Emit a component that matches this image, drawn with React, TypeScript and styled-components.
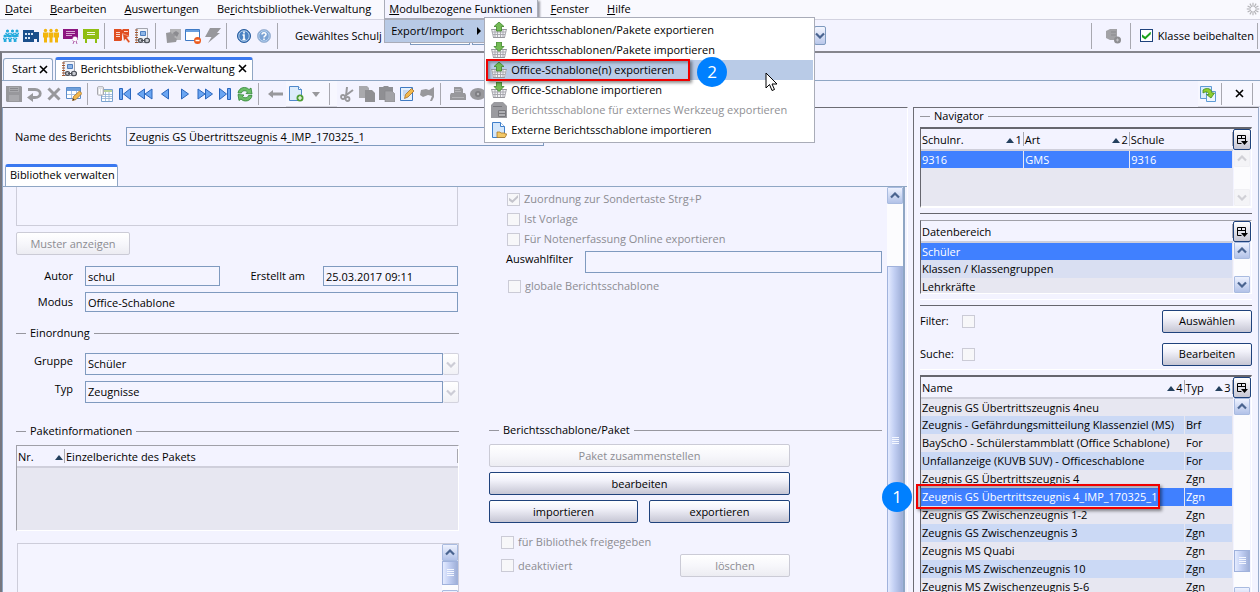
import React from "react";
import styled, { createGlobalStyle, css } from "styled-components";

const GlobalStyle = createGlobalStyle`
  *, *::before, *::after { box-sizing: border-box; }
  body {
    margin: 0;
    background: #f3f3ff;
    color: #000;
    font: 11px/16px "Open Sans", "Noto Sans", sans-serif;
  }
  button, input, select, textarea {
    font: inherit;
    color: inherit;
    margin: 0;
    padding: 0;
    border-radius: 0;
    outline: none;
  }
`;

/* ---------- frame ---------- */

const Window = styled.div`
  display: flex;
  flex-direction: column;
  height: 100vh;
  overflow: hidden;
`;

const MenuBar = styled.nav`
  display: flex;
  gap: 8px;
  height: 20px;
  background: #f9f9fe;
  border-bottom: 1px solid #d3d3e0;
`;

const MenuEntry = styled.div<{ $open?: boolean }>`
  position: relative;
  border: 1px solid transparent;
  border-top: 0;
  ${(p) =>
    p.$open &&
    css`
      border-color: #a9acb8;
      background: #f3f3ff;
      box-shadow: 2px 1px 2px #9a9aa4;
    `}
`;

const MenuTitle = styled.button`
  height: 18px;
  padding: 0 4px;
  border: 0;
  background: none;
  line-height: 18px;
  white-space: nowrap;
`;

const Busy = styled.div`
  margin-left: auto;
  width: 14px;
  overflow: hidden;
  display: flex;
`;

const Cascade = styled.div`
  position: absolute;
  z-index: 5;
  top: 19px;
  left: -1px;
  width: 102px;
  border: 1px solid #a9acb8;
  background: #b8cae6;
`;

const CascadeItem = styled.button`
  display: flex;
  align-items: center;
  justify-content: space-between;
  width: 100%;
  height: 22px;
  padding: 0 3px 0 6px;
  border: 0;
  background: none;
`;

const Popup = styled.div`
  position: absolute;
  top: -3px;
  left: 99px;
  width: 331px;
  padding: 2px 1px;
  border: 1px solid #a9acb8;
  background: #fff;
`;

const PopupItem = styled.button<{ $active?: boolean }>`
  position: relative;
  display: flex;
  align-items: center;
  gap: 4px;
  width: 100%;
  height: 20px;
  padding: 0 5px;
  border: 0;
  background: ${(p) => (p.$active ? "#b9cbe7" : "none")};
  white-space: nowrap;
  &:disabled { color: #909094; }
`;

const Toolbar = styled.div`
  display: flex;
  align-items: center;
  height: 31px;
  padding-left: 1px;
  background: #f3f3ff;
`;

const SubToolbar = styled(Toolbar)`
  height: 26px;
  padding-left: 2px;
`;

const IconButton = styled.button`
  display: flex;
  align-items: center;
  justify-content: center;
  width: 20px;
  height: 20px;
  border: 0;
  background: none;
`;

const Divider = styled.span`
  width: 1px;
  height: 26px;
  margin: 0 7px 0 3px;
  background: #a8a8b0;
`;

const SmallDivider = styled(Divider)`
  height: 22px;
`;

const EndDivider = styled(Divider)`
  margin-right: 2px;
`;

const PaddedTools = styled.div`
  padding: 0 4px;
`;

const Spacer = styled.span`
  flex: 1;
`;

const YearPicker = styled.label`
  display: flex;
  align-items: center;
  gap: 28px;
  margin-left: 10px;
  white-space: nowrap;
`;

const YearField = styled.div`
  display: flex;
  gap: 2px;
`;

const YearInput = styled.input`
  width: 60px;
  height: 19px;
  border: 1px solid #7f9abf;
  background: #fff;
`;

const YearSelect = styled.select`
  appearance: none;
  width: 342px;
  height: 19px;
  border: 1px solid #7f9abf;
  background: #f4f4ff;
`;

const ArrowCap = styled.span`
  display: flex;
  align-items: center;
  justify-content: center;
  width: 12px;
  height: 19px;
  margin-left: -2px;
  border: 1px solid #7f9abf;
  border-radius: 2px;
  background: linear-gradient(#f4f6ff, #b9c7ea);
`;

const ClassLock = styled.label`
  display: flex;
  align-items: center;
  gap: 5px;
  margin-left: 2px;
  white-space: nowrap;
`;

const Workspace = styled.div`
  flex: 1;
  display: flex;
  flex-direction: column;
  min-height: 0;
  border-top: 2px solid #85858d;
  border-left: 2px solid #77777f;
  padding-top: 4px;
`;

const TabStrip = styled.div`
  display: flex;
  align-items: flex-end;
  gap: 2px;
  height: 24px;
  padding-left: 1px;
  border-bottom: 1px solid #8fa6c4;
`;

const Tab = styled.button<{ $active?: boolean }>`
  display: flex;
  align-items: center;
  gap: 3px;
  height: ${(p) => (p.$active ? "23px" : "22px")};
  padding: 0 4px 1px 8px;
  border: 1px solid #8fa6c4;
  border-bottom: 0;
  border-radius: 3px 3px 0 0;
  background: #f9f9ff;
  ${(p) =>
    p.$active &&
    css`
      padding: 0 5px 3px;
      background: #fff;
      border-top: 3px solid #3a78f0;
    `}
`;

const ToolGroup = styled.div`
  display: flex;
  align-items: center;
  height: 26px;
  border-bottom: 1px solid #d6d6e2;
  background: #f7f7ff;
`;

const Panes = styled.div`
  flex: 1;
  display: flex;
  gap: 5px;
  min-height: 0;
`;

/* ---------- editor pane ---------- */

const Editor = styled.main`
  flex: 1;
  display: flex;
  flex-direction: column;
  min-width: 0;
  border-top: 1px solid #6c6c74;
  border-left: 1px solid #8fa6c4;
  border-right: 1px solid #fff;
`;

const NameRow = styled.label`
  display: flex;
  align-items: center;
  gap: 15px;
  padding: 19px 0 0 12px;
`;

const TextInput = styled.input`
  flex: 1;
  min-width: 0;
  height: 20px;
  padding: 0 2px;
  border: 1px solid #7f9abf;
  background: #f4f4ff;
`;

const NameInput = styled(TextInput)`
  flex: none;
  width: 418px;
  height: 19px;
`;

const InnerTabs = styled.div`
  display: flex;
  margin-top: 18px;
  padding-left: 2px;
  border-bottom: 1px solid #8fa6c4;
`;

const InnerTab = styled.button`
  height: 22px;
  padding: 0 2px 3px 4px;
  border: 1px solid #8fa6c4;
  border-top: 3px solid #3a78f0;
  border-bottom: 0;
  border-radius: 3px 3px 0 0;
  background: #fff;
`;

const ScrollArea = styled.div`
  flex: 1;
  display: flex;
  min-height: 0;
  margin-right: 2px;
  border-right: 2px solid #8fa6c4;
  overflow: hidden;
`;

const Form = styled.div`
  flex: 1;
  display: grid;
  grid-template-columns: 443px 1fr;
  column-gap: 30px;
  padding: 0 5px 0 13px;
`;

const Column = styled.div`
  display: flex;
  flex-direction: column;
  min-width: 0;
`;

const Preview = styled.textarea`
  display: block;
  height: 39px;
  width: 442px;
  border: 1px solid #cdcdda;
  border-top: 0;
  background: #f4f4ff;
  resize: none;
`;

const Button = styled.button`
  height: 23px;
  padding: 0 8px;
  border: 1px solid #1f427c;
  border-radius: 2px;
  background: linear-gradient(#ffffff, #f2f2fa 35%, #c6c6d4);
  white-space: nowrap;
  &:disabled {
    color: #8c8c92;
    border-color: #cbcbd6;
    background: linear-gradient(#ffffff, #f7f7fb 50%, #ececf2);
  }
`;

const SampleButton = styled(Button)`
  width: 114px;
  margin: 6px 0 11px;
`;

const FieldGrid = styled.div`
  display: grid;
  grid-template-columns: 57px 1fr;
  align-items: center;
  gap: 6px 12px;
`;

const FieldLabel = styled.label`
  text-align: right;
`;

const RaisedLabel = styled(FieldLabel)`
  align-self: start;
`;

const FieldLine = styled.div`
  display: flex;
  align-items: center;
  padding-right: 1px;
`;

const HalfInput = styled(TextInput)`
  flex: none;
  width: 135px;
`;

const MidLabel = styled.label`
  flex: 1;
  text-align: right;
  padding-right: 18px;
`;

const Combo = styled.div`
  display: flex;
`;

const ComboSelect = styled.select`
  flex: 1;
  appearance: none;
  height: 22px;
  padding: 0 2px;
  border: 1px solid #7f9abf;
  background: #f4f4ff;
  opacity: 1;
  color: #000;
`;

const ComboCap = styled.span`
  display: flex;
  align-items: center;
  justify-content: center;
  width: 16px;
  height: 22px;
  border: 1px solid #d3d3de;
  border-left: 0;
  border-radius: 2px;
  background: linear-gradient(#fff, #f1f1f6);
`;

const Legend = styled.h2<{ $top: number; $bottom: number }>`
  display: flex;
  flex: none;
  align-items: center;
  gap: 4px;
  margin: ${(p) => p.$top}px 0 ${(p) => p.$bottom}px;
  font-size: 11px;
  font-weight: 400;
  line-height: 16px;
  &::before, &::after { content: ""; height: 1px; background: #97979f; }
  &::before { width: 10px; }
  &::after { flex: 1; }
`;

const Frame = styled.div<{ $height?: string; $soft?: boolean }>`
  display: flex;
  flex: none;
  height: ${(p) => p.$height ?? "auto"};
  border-style: solid;
  border-width: 1px;
  border-color: ${(p) => (p.$soft ? "#a0a0a8 #fff #fff #a0a0a8" : "#66666e #fff #fff #66666e")};
  background: #e7e7f1;
`;

const GapFrame = styled(Frame)`
  border-width: 2px 1px 2px 1px;
`;

const ClippedFrame = styled(Frame)`
  border-top-color: #a0a0a8;
`;

const Clip = styled.div`
  flex: 1;
  min-width: 0;
  overflow: hidden;
`;

const TableHolder = styled.div`
  flex: 1;
  min-width: 0;
`;

const Table = styled.table`
  width: 100%;
  table-layout: fixed;
  border-collapse: collapse;
`;

const HeadCell = styled.th`
  height: 21px;
  padding: 2px 0 0 1px;
  border-bottom: 2px solid #cfcfdb;
  background: linear-gradient(90deg, #a8a8b0, #a8a8b0) right center / 1px 14px no-repeat #f3f3ff;
  font-weight: 400;
  text-align: left;
  white-space: nowrap;
`;

const HeadContent = styled.span`
  display: flex;
  align-items: center;
  justify-content: space-between;
  padding-right: 2px;
`;

const SortMark = styled.span`
  display: flex;
  align-items: center;
  gap: 1px;
`;

const Row = styled.tr<{ $tone: "plain" | "alt" | "soft" | "selected" }>`
  height: 18px;
  background: ${(p) =>
    ({ plain: "#e7e7f1", alt: "#cbd9f5", soft: "#d9dff2", selected: "#4080ff" })[p.$tone]};
  color: ${(p) => (p.$tone === "selected" ? "#fff" : "#000")};
`;

const Cell = styled.td`
  position: relative;
  height: 18px;
  padding: 0 1px;
  line-height: 16px;
  border-right: 1px solid #e7e7f1;
  white-space: nowrap;
`;

const Notes = styled.div`
  display: flex;
  height: 120px;
  margin: 12px 0 0 1px;
  border: 1px solid #cdcdda;
  background: #f4f4ff;
`;

const NotesInput = styled.textarea`
  flex: 1;
  border: 0;
  background: none;
  resize: none;
`;

/* ---------- check boxes ---------- */

const CheckLabel = styled.label<{ $muted?: boolean }>`
  display: flex;
  align-items: center;
  gap: 4px;
  height: 20px;
  color: ${(p) => (p.$muted ? "#8c8c92" : "inherit")};
`;

const Check = styled.input.attrs({ type: "checkbox" })`
  appearance: none;
  display: flex;
  align-items: center;
  justify-content: center;
  width: 13px;
  height: 13px;
  border: 1px solid #1f427c;
  background: #fff;
  &:checked::after {
    content: "";
    width: 9px;
    height: 8px;
    background: #1ba31b;
    clip-path: polygon(0 35%, 38% 65%, 100% 0, 100% 35%, 38% 100%, 0 70%);
  }
  &:disabled { border-color: #cbcbd6; background: #f7f7f9; }
  &:disabled:checked::after { background: #c4c4cc; }
`;

const OptionList = styled.div`
  padding: 2px 0 0 18px;
`;

const GlobalOption = styled.div`
  padding: 3px 0 1px 19px;
`;

const FilterRow = styled.label`
  display: flex;
  align-items: flex-start;
  justify-content: space-between;
  height: 22px;
  margin-top: 2px;
  padding-left: 17px;
`;

const FilterInput = styled(TextInput)`
  flex: none;
  width: calc(100% - 79px);
  height: 22px;
`;

const ButtonStack = styled.div`
  display: grid;
  grid-template-columns: 149px 141px;
  gap: 5px 11px;
  width: 301px;
`;

const WideButton = styled(Button)`
  grid-column: 1 / -1;
`;

const ReleaseGrid = styled.div`
  width: 301px;
  margin-top: 9px;
  padding-left: 12px;
`;

const DeleteLine = styled.div`
  display: flex;
  justify-content: space-between;
  align-items: center;
  height: 27px;
`;

const DeleteButton = styled(Button)`
  width: 110px;
`;

/* ---------- scroll bars ---------- */

const Track = styled.div`
  display: flex;
  flex-direction: column;
  width: 16px;
  height: 100%;
  background: #fcfcfe;
`;

const StepButton = styled.button<{ $faint?: boolean }>`
  display: flex;
  align-items: center;
  justify-content: center;
  flex: none;
  height: 17px;
  border: 1px solid ${(p) => (p.$faint ? "#f0f0f4" : "#a9bbe0")};
  border-radius: 1px;
  background: ${(p) => (p.$faint ? "#f4f4f7" : "linear-gradient(#eef2ff, #b2c2e8)")};
`;

const Thumb = styled.div<{ $size: string }>`
  display: flex;
  align-items: center;
  justify-content: center;
  flex: none;
  height: ${(p) => p.$size};
  border: 1px solid #a0b2dc;
  background: linear-gradient(90deg, #e4ebff, #c2cff3 45%, #a0b0d8);
`;

const Grip = styled.span`
  width: 7px;
  height: 8px;
  background: repeating-linear-gradient(#f4f7ff 0 1px, transparent 1px 2px);
`;

const Blank = styled.div<{ $size: string }>`
  flex: none;
  height: ${(p) => p.$size};
`;

const SideColumn = styled.div`
  display: flex;
  flex-direction: column;
  width: 18px;
  background: #f3f3ff;
  padding: 0 1px;
`;

const CornerButton = styled.button`
  display: flex;
  align-items: center;
  justify-content: center;
  flex: none;
  height: 21px;
  margin: 0 -1px;
  border: 1px solid #1f427c;
  border-radius: 2px;
  background: linear-gradient(#fff, #c6c6d4);
`;

const TrackHolder = styled.div`
  flex: 1;
  min-height: 0;
`;

/* ---------- navigator ---------- */

const Side = styled.aside`
  display: flex;
  flex: none;
  flex-direction: column;
  width: 346px;
  margin-right: 1px;
  padding: 0 6px;
  border-top: 1px solid #6c6c74;
  border-left: 1px solid #6c6c74;
  border-right: 1px solid #9aaccb;
`;

const Section = styled.div`
  flex: none;
  margin-top: 5px;
  padding-top: 6px;
  border-top: 1px solid #66666e;
`;

const FilterSection = styled.div`
  flex: none;
  margin-top: 5px;
  border-top: 1px solid #fff;
  padding-top: 5px;
`;

const SearchGroup = styled.div`
  display: grid;
  gap: 3px;
  margin-bottom: 5px;
  border-top: 1px solid #66666e;
  border-bottom: 1px solid #fff;
`;

const SearchLine = styled.div`
  display: flex;
  align-items: center;
  justify-content: space-between;
  height: 30px;
`;

const SearchOption = styled.label`
  display: grid;
  grid-template-columns: 42px 13px;
  align-items: center;
`;

const SideButton = styled(Button)`
  width: 90px;
`;

/* ---------- step markers ---------- */

const Highlight = styled.span`
  position: absolute;
  z-index: 2;
  border: 2px solid #f00000;
  box-shadow: 2px 2px 3px rgba(0, 0, 0, 0.45), inset 2px 2px 3px rgba(0, 0, 0, 0.3);
  pointer-events: none;
`;

const ExportHighlight = styled(Highlight)`
  top: -1px;
  left: 0;
  width: 204px;
  height: 22px;
`;

const RowHighlight = styled(Highlight)`
  top: -4px;
  left: -5px;
  width: 244px;
  height: 25px;
`;

const StepBadge = styled.span`
  position: absolute;
  z-index: 3;
  display: flex;
  align-items: center;
  justify-content: center;
  width: 30px;
  height: 30px;
  border-radius: 50%;
  background: #0080ff;
  color: #fff;
  font-size: 17px;
  line-height: 30px;
`;

const ExportBadge = styled(StepBadge)`
  top: -3px;
  left: 211px;
`;

const RowBadge = styled(StepBadge)`
  top: -6px;
  left: -39px;
`;

const Pointer = styled.span`
  position: absolute;
  top: 12px;
  left: 279px;
  z-index: 3;
  display: flex;
`;

/* ---------- drawings ---------- */

const Svg = ({ children, size = 16 }: { children: React.ReactNode; size?: number }) => (
  <svg width={size} height={size} viewBox="0 0 16 16" aria-hidden="true">
    {children}
  </svg>
);

const GREY = "#98989c";

const People = ({ color, tall }: { color: string; tall?: boolean }) => (
  <Svg>
    {tall
      ? [2.5, 8, 13.5].map((x) => (
          <g key={x} fill={color}>
            <circle cx={x} cy="2.500" r="1.700" />
            <path d={`M${x - 2.5} 4.500h5v5h-1v5h-3v-5h-1z`} />
          </g>
        ))
      : [
          [2, 9], [7, 9], [12, 9], [4.5, 4], [9.5, 4], [14, 4],
        ].map(([x, y]) => (
          <g key={`${x}-${y}`} fill="none" stroke={color} strokeWidth="1.300">
            <circle cx={x} cy={y - 1} r=".9" fill={color} />
            <path d={`M${x - 2} ${y + 1}l1.500 1.500h1l1.500-1.500M${x - 0.6} ${y + 2}v3M${x + 0.8} ${y + 2}v3`} />
          </g>
        ))}
  </Svg>
);

const School = () => (
  <Svg>
    <path d="M0 2h11v2h5v10h-2v-3h-3v3H0z" fill="#1b4f8c" />
    <path d="M2 5h2v2H2zM5 5h2v2H5zM8 5h2v2H8zM2 9h2v2H2zM5 9h2v2H5z" fill="#dbe8f6" />
  </Svg>
);

const Certificate = () => (
  <Svg>
    <path d="M0 1h15v10H0z" fill="#8c1580" />
    <path d="M3 3.500h9M3 5.500h9M3 7.500h6" stroke="#d9a8d4" />
    <circle cx="12" cy="11" r="2.600" fill="#fff" stroke="#b565ad" strokeDasharray="1 1" />
    <path d="M11 13l-1 3M13 13l1 3" stroke="#b565ad" />
  </Svg>
);

const Board = () => (
  <Svg>
    <path d="M0 1h16v10H0zM2 11h2v4H2zM12 11h2v4h-2z" fill="#8fbe12" />
    <path d="M4 4.500h8M4 6.500h8" stroke="#f3f9dc" />
  </Svg>
);

const BookArrow = () => (
  <Svg>
    <path d="M0 1h7l1 1 1-1h6v8l-3-1-4-2v6l-1 1H0z" fill="#e04e22" />
    <path d="M2 4.500h4M2 6.500h4M2 8.500h4M10 3.500h4" stroke="#fbd8cb" />
    <path d="M8.500 5.500l7 3-2.500 1 3 4-1.500 1.500-3-4-1.500 2z" fill="#e04e22" stroke="#f9e0d8" strokeWidth=".5" />
  </Svg>
);

const Binder = () => (
  <Svg>
    <path d="M2.500.5h11v14h-11z" fill="#f2f3f8" stroke="#a3a5ae" />
    <path d="M6.500 3.500h5v4h-5z" fill="#8fb6e6" stroke="#4f7fc0" />
    <path d="M1 2h3M1 4.500h3M1 7h3M1 9.500h3M1 12h3M1 14.500h3" stroke="#a4552d" />
    <path
      d="M4.500 12.500c0-2.500 4-2.500 4 0s-4 2.500-4 0zM7 12.500h4.500M10.500 12.500c0-3 5-3 5 0s-5 3-5 0z"
      fill="#c9ccd3"
      stroke="#4c5058"
      strokeWidth="1.200"
    />
  </Svg>
);

const GreyPuzzle = () => (
  <Svg>
    <path d="M5 1h11v11H5z" fill="#b3b3b6" />
    <path d="M1 5l5-1 1 2 3-2 1 3-2 2 3 2-1 3-9 1z" fill={GREY} />
    <path d="M8 5l3-2 3 2-2 4z" fill="#8b8b90" />
  </Svg>
);

const WindowMinus = () => (
  <Svg>
    <path d="M.5 1.500h14v11H.5z" fill="#fff" stroke="#3e79c4" />
    <path d="M1 2h13v2H1z" fill="#6aa0e0" />
    <circle cx="12.500" cy="12.500" r="3.500" fill="#ec5a1c" />
    <path d="M10.500 12.500h4" stroke="#fff" strokeWidth="1.500" />
  </Svg>
);

const Bolt = () => (
  <Svg>
    <path d="M5 0h11l-4 5h3L3 15l3.500-6H0z" fill={GREY} />
  </Svg>
);

const Round = ({ question }: { question?: boolean }) => (
  <Svg>
    <circle cx="8" cy="8" r="6.500" fill={question ? "#7ba3d4" : "#4a82c3"} stroke={question ? "#a4b8d6" : "#275c9e"} />
    <circle cx="8" cy="8" r="5.200" fill="none" stroke="#c7dcf2" strokeWidth=".8" />
    {question ? (
      <path d="M6 6.500c0-2.500 4-2.500 4 0 0 1.500-2 1.200-2 3M8 10.500v1.500" fill="none" stroke="#fff" strokeWidth="1.500" />
    ) : (
      <path d="M8 3.500v2M6.500 7H8v4M6.500 11.500h3" fill="none" stroke="#fff" strokeWidth="1.600" />
    )}
  </Svg>
);

const GreyDb = () => (
  <Svg>
    <path d="M1 3l4-2h7v11H5l-4-2z" fill="#a2a2a6" />
    <path d="M6 4h5M6 7h5" stroke="#8a8a8e" />
    <circle cx="12.500" cy="12" r="3.500" fill="#8e8e92" />
    <path d="M11 12h3M12.500 10.500v3" stroke="#c4c4c8" />
  </Svg>
);

const Floppy = () => (
  <Svg>
    <path d="M0 0h15l1 1v15H1l-1-1z" fill={GREY} />
    <path d="M3 1h10v5H3zM3 9h10v6H3z" fill="#a9a9ad" />
    <path d="M4 2.500h8M4 4.500h8" stroke="#8a8a8e" />
  </Svg>
);

const Undo = () => (
  <Svg>
    <path d="M2 3.500h7c7 0 7 8 0 8H5" fill="none" stroke={GREY} strokeWidth="2.800" />
    <path d="M7 7v9l-6-4.500z" fill={GREY} />
  </Svg>
);

const BigX = () => (
  <Svg>
    <path d="M2.500 2.500l11 11M13.500 2.500l-11 11" stroke={GREY} strokeWidth="3" />
  </Svg>
);

const TableEdit = () => (
  <Svg>
    <path d="M.5 1.500h14v11H.5z" fill="#fff" stroke="#5a8cca" />
    <path d="M1 2h13v3H1z" fill="#6f9fdb" />
    <path d="M1 8.500h13M5.500 5v7M10.500 5v7" stroke="#a9c3e4" />
    <path d="M6.500 14.500l1-4 6-5.500 2.500 2.500-6 6z" fill="#f2b84b" stroke="#a5702b" strokeWidth=".8" />
    <path d="M6.500 14.500l.8-2 1.400 1.400z" fill="#333" />
  </Svg>
);

const PageEdit = () => (
  <Svg>
    <path d="M1.500 1.500h12v13h-12z" fill="#e5f0fc" stroke="#3f7ac2" />
    <path d="M4 5h6M4 7h5M4 9h4" stroke="#a9c3e4" />
    <path d="M5.500 12.500l1-4 6-6 2.500 2.500-6 6z" fill="#f2b84b" stroke="#a5702b" strokeWidth=".8" />
  </Svg>
);

const Sheet = () => (
  <Svg>
    <path d="M4.500 3.500h11v12h-11z" fill="#fff" stroke="#7ba3cf" />
    <path d="M5 4h10v2H5z" fill="#b8d29a" />
    <path d="M5 8.500h10M5 10.500h10M5 12.500h10M8.500 6v9M12 6v9" stroke="#8fb0d4" strokeWidth=".8" />
    <path d="M.5 1.500c0-1.500 6-1.500 6 0v7c0 1-6 1-6 0z" fill="#e2e2e6" stroke="#a8a8ae" />
    <path d="M2.500 3v5M4.500 3v5" stroke="#fff" />
  </Svg>
);

type NavKind = "first" | "rew" | "prev" | "next" | "ff" | "last";
const navPaths: Record<NavKind, string> = {
  first: "M2.500 2.500h3v11h-3zM13.500 2.500v11L6.500 8z",
  rew: "M7.500 3v10L.5 8zM15 3v10L8 8z",
  prev: "M11.500 3v10L4.500 8z",
  next: "M4.500 3v10l7-5z",
  ff: "M1 3v10l7-5zM8.500 3v10l7-5z",
  last: "M2.500 2.500v11L9.500 8zM10.500 2.500h3v11h-3z",
};
const Nav = ({ kind }: { kind: NavKind }) => (
  <Svg>
    <path d={navPaths[kind]} fill="#6aa5f2" stroke="#2a66bd" strokeLinejoin="round" />
  </Svg>
);

const Refresh = () => (
  <Svg>
    <path
      d="M1 7c1-6 8-7 11-3.500L14 2l1 6-6-.5 1.500-1.500C8.500 4 5 4.500 4.500 7z"
      fill="#6cbd68"
      stroke="#2f8436"
      strokeWidth=".8"
    />
    <path
      d="M15 9.500c-1 6-8 7-11 3.500L2 14.500l-1-6 6 .5-1.500 1.500c2 2 5.500 1.500 6-1z"
      fill="#6cbd68"
      stroke="#2f8436"
      strokeWidth=".8"
    />
  </Svg>
);

const BackArrow = () => (
  <Svg>
    <path d="M0 8l5-4v2.500h10v3H5V12z" fill={GREY} />
  </Svg>
);

const PageAdd = () => (
  <Svg>
    <path d="M1.500.5h9l3 3v11h-12z" fill="#dcebfb" stroke="#4f88cb" />
    <path d="M10.500.5v3h3" fill="#fff" stroke="#4f88cb" />
    <circle cx="12" cy="12" r="3.500" fill="#4f9e35" />
    <path d="M10 12h4M12 10v4" stroke="#fff" strokeWidth="1.200" />
  </Svg>
);

const DownTri = () => (
  <Svg>
    <path d="M4 6h8l-4 5z" fill={GREY} />
  </Svg>
);

const Scissors = () => (
  <Svg>
    <path d="M8 1l-1 9M14 4l-8 6" stroke={GREY} strokeWidth="2" />
    <circle cx="4" cy="11" r="2" fill="none" stroke={GREY} strokeWidth="1.800" />
    <circle cx="8.500" cy="13" r="2" fill="none" stroke={GREY} strokeWidth="1.800" />
  </Svg>
);

const Copy = () => (
  <Svg>
    <path d="M0 0h8l2 2v10H0z" fill="#a9a9ad" />
    <path d="M6 4h7l3 3v9H6z" fill="#8f8f93" />
  </Svg>
);

const Paste = () => (
  <Svg>
    <path d="M0 1h4l1-1h4l1 1h4v13H0z" fill="#8f8f93" />
    <path d="M6 5h7l3 3v8H6z" fill="#a2a2a6" stroke="#88888c" strokeWidth=".6" />
  </Svg>
);

const Flag = () => (
  <Svg>
    <path d="M15 1v10l-2 4h-2l2-5-4-1-5 2-3-2 1-5 5-1 3 1z" fill={GREY} />
  </Svg>
);

const Printer = () => (
  <Svg>
    <path d="M4 1h7l2 2v4h2l1 2v5H0V9l1-2h3z" fill={GREY} />
    <path d="M5 3.500h5M5 5.500h6M2 11.500h12" stroke="#b4b4b8" />
  </Svg>
);

const Eye = () => (
  <Svg>
    <ellipse cx="8" cy="8" rx="8" ry="6" fill={GREY} />
    <circle cx="8" cy="8" r="3" fill="#7e7e82" />
    <circle cx="8" cy="8" r="1.200" fill="#b4b4b8" />
  </Svg>
);

const Basket = ({ up }: { up?: boolean }) => (
  <Svg>
    <path d="M0 7h16l-2 8.500H2z" fill="#f1f1f4" />
    <path d="M0 7.500h16M2 15.500h12" stroke="#96969c" />
    <path
      d="M.5 7l2 8.500M15.500 7l-2 8.500M4 8v7M6.500 8v7M9.500 8v7M12 8v7M1 10h14M2 12.500h12"
      stroke="#a4a4aa"
      strokeWidth=".9"
    />
    <path
      d={up ? "M8 0l5 4.500h-2.500V9h-5V4.500H3z" : "M5.500 0h5v4.500H13L8 9.500 3 4.500h2.500z"}
      fill="#74bb55"
      stroke="#3f8529"
      strokeWidth=".8"
    />
  </Svg>
);

const GreyTool = () => (
  <Svg>
    <path d="M0 3l3-3h9l4 4v12H0z" fill="#9b9b9f" />
    <path d="M2 4.500h9M7.500 8.500h7v6h-7z" stroke="#77777b" fill="#b0b0b4" />
    <path d="M7 11.500h7" stroke="#77777b" />
  </Svg>
);

const PageFolder = () => (
  <Svg>
    <path d="M1.500.5h8l4 4v11h-12z" fill="#d5e7fa" stroke="#3f7fca" />
    <path d="M9.500.5v4h4" fill="#fff" stroke="#3f7fca" />
    <path d="M6 15.500V10h3l1 1h4v1h2l-2 3.500z" fill="#f3c866" stroke="#a87a2c" strokeWidth=".8" />
  </Svg>
);

const SwapPages = () => (
  <Svg>
    <path d="M.5.5h11v12H.5z" fill="#dcecfb" stroke="#5e9bd6" />
    <path d="M6.500 5.500h9v10h-9z" fill="#eef6fe" stroke="#5e9bd6" />
    <path d="M3 4c4-3 9-1 9 3h2.500L11 12 6.500 8.500H9C8.500 6 6 5 3 7z" fill="#8fce2f" stroke="#3f8a1f" strokeWidth=".8" />
  </Svg>
);

const CloseX = () => (
  <svg width="9" height="9" viewBox="0 0 9 9" aria-hidden="true">
    <path d="M1 1l7 7M8 1L1 8" stroke="#000" strokeWidth="1.600" />
  </svg>
);

const Chevron = ({ down, color = "#4a6490" }: { down?: boolean; color?: string }) => (
  <svg width="10" height="7" viewBox="0 0 10 7" aria-hidden="true">
    <path d={down ? "M1 1.500l4 4 4-4" : "M1 5.500l4-4 4 4"} fill="none" stroke={color} strokeWidth="2.200" />
  </svg>
);

const SortArrow = () => (
  <svg width="8" height="5" viewBox="0 0 8 5" aria-hidden="true">
    <path d="M0 5l4-5 4 5z" fill="#24405e" />
  </svg>
);

const ColumnIcon = () => (
  <svg width="12" height="12" viewBox="0 0 12 12" aria-hidden="true">
    <path d="M1.500 1.500h8v3h-8zM5.500 1.500v3M1.500 4v5.500h4M9.500 4v3" fill="none" stroke="#000" />
    <path d="M5 7h7l-3.500 4z" fill="#000" />
  </svg>
);

const Spinner = () => (
  <svg width="18" height="18" viewBox="0 0 18 18" aria-hidden="true">
    {Array.from({ length: 12 }, (_, i) => (
      <path key={i} d="M9 1v5" stroke="#b4b4b8" strokeWidth="1.500" transform={`rotate(${i * 30} 9 9)`} />
    ))}
  </svg>
);

const Cursor = () => (
  <svg width="13" height="20" viewBox="0 0 13 20" aria-hidden="true">
    <path d="M1 1v15l3.500-3.500 2.500 6 2.500-1-2.500-5.500h5z" fill="#fff" stroke="#000" />
  </svg>
);

const RightTri = () => (
  <svg width="6" height="8" viewBox="0 0 6 8" aria-hidden="true">
    <path d="M1 0l4 4-4 4z" fill="#000" />
  </svg>
);

/* ---------- content ---------- */

const Mnemonic = ({ text, at = 0 }: { text: string; at?: number }) => (
  <>
    {text.slice(0, at)}
    <u>{text[at]}</u>
    {text.slice(at + 1)}
  </>
);

const Tools = ({ items }: { items: [string, React.ReactNode][] }) => (
  <>
    {items.map(([name, icon]) => (
      <IconButton key={name} type="button" aria-label={name}>
        {icon}
      </IconButton>
    ))}
  </>
);

const ReportMenu = () => (
  <Popup role="menu">
    <PopupItem type="button"><Basket up />Berichtsschablonen/Pakete exportieren</PopupItem>
    <PopupItem type="button"><Basket />Berichtsschablonen/Pakete importieren</PopupItem>
    <PopupItem type="button" $active>
      <Basket up />Office-Schablone(n) exportieren
      <ExportHighlight />
      <ExportBadge>2</ExportBadge>
      <Pointer><Cursor /></Pointer>
    </PopupItem>
    <PopupItem type="button"><Basket />Office-Schablone importieren</PopupItem>
    <PopupItem type="button" disabled><GreyTool />Berichtsschablone für externes Werkzeug exportieren</PopupItem>
    <PopupItem type="button"><PageFolder />Externe Berichtsschablone importieren</PopupItem>
  </Popup>
);

const SortHead = ({ label, order }: { label: string; order?: string }) => (
  <HeadContent>
    {label}
    {order !== undefined && <SortMark><SortArrow />{order}</SortMark>}
  </HeadContent>
);

const reports: [string, string][] = [
  ["Zeugnis GS Übertrittszeugnis 4neu", ""],
  ["Zeugnis - Gefährdungsmitteilung Klassenziel (MS)", "Brf"],
  ["BaySchO - Schülerstammblatt (Office Schablone)", "For"],
  ["Unfallanzeige (KUVB SUV) - Officeschablone", "For"],
  ["Zeugnis GS Übertrittszeugnis 4", "Zgn"],
  ["Zeugnis GS Übertrittszeugnis 4_IMP_170325_1", "Zgn"],
  ["Zeugnis GS Zwischenzeugnis 1-2", "Zgn"],
  ["Zeugnis GS Zwischenzeugnis 3", "Zgn"],
  ["Zeugnis MS Quabi", "Zgn"],
  ["Zeugnis MS Zwischenzeugnis 10", "Zgn"],
  ["Zeugnis MS Zwischenzeugnis 5-6", "Zgn"],
];
const selectedReport = 5;

const Corner = () => (
  <CornerButton type="button" aria-label="Spalten auswählen"><ColumnIcon /></CornerButton>
);

const Step = ({ down, faint }: { down?: boolean; faint?: boolean }) => (
  <StepButton type="button" $faint={faint} aria-label={down ? "Nach unten" : "Nach oben"}>
    <Chevron down={down} color={faint ? "#d0d0d6" : undefined} />
  </StepButton>
);

const FormLeft = () => (
  <Column>
    <Preview aria-label="Vorschau" readOnly />
    <SampleButton type="button" disabled>Muster anzeigen</SampleButton>
    <FieldGrid>
      <FieldLabel htmlFor="author">Autor</FieldLabel>
      <FieldLine>
        <HalfInput id="author" readOnly value="schul" />
        <MidLabel htmlFor="created">Erstellt am</MidLabel>
        <HalfInput id="created" readOnly value="25.03.2017 09:11" />
      </FieldLine>
      <FieldLabel htmlFor="mode">Modus</FieldLabel>
      <FieldLine><TextInput id="mode" readOnly value="Office-Schablone" /></FieldLine>
    </FieldGrid>
    <Legend $top={13} $bottom={12}>Einordnung</Legend>
    <FieldGrid>
      <RaisedLabel htmlFor="group">Gruppe</RaisedLabel>
      <Combo>
        <ComboSelect id="group" disabled><option>Schüler</option></ComboSelect>
        <ComboCap><Chevron down color="#cdcdd6" /></ComboCap>
      </Combo>
      <RaisedLabel htmlFor="type">Typ</RaisedLabel>
      <Combo>
        <ComboSelect id="type" disabled><option>Zeugnisse</option></ComboSelect>
        <ComboCap><Chevron down color="#cdcdd6" /></ComboCap>
      </Combo>
    </FieldGrid>
    <Legend $top={20} $bottom={6}>Paketinformationen</Legend>
    <Frame $soft $height="86px">
      <Clip>
        <Table>
          <colgroup><col style={{ width: 48 }} /><col /></colgroup>
          <thead>
            <tr>
              <HeadCell><SortHead label="Nr." order="" /></HeadCell>
              <HeadCell>Einzelberichte des Pakets</HeadCell>
            </tr>
          </thead>
          <tbody />
        </Table>
      </Clip>
    </Frame>
    <Notes>
      <NotesInput aria-label="Bemerkung" readOnly />
      <Track>
        <Step />
        <Thumb $size="24px"><Grip /></Thumb>
        <Blank $size="5px" />
        <Step down />
      </Track>
    </Notes>
  </Column>
);

const FormRight = () => (
  <Column>
    <OptionList>
      <CheckLabel $muted><Check disabled defaultChecked />Zuordnung zur Sondertaste Strg+P</CheckLabel>
      <CheckLabel $muted><Check disabled />Ist Vorlage</CheckLabel>
      <CheckLabel $muted><Check disabled />Für Notenerfassung Online exportieren</CheckLabel>
    </OptionList>
    <FilterRow>Auswahlfilter<FilterInput readOnly /></FilterRow>
    <GlobalOption>
      <CheckLabel $muted><Check disabled />globale Berichtsschablone</CheckLabel>
    </GlobalOption>
    <Legend $top={125} $bottom={6}>Berichtsschablone/Paket</Legend>
    <ButtonStack>
      <WideButton type="button" disabled>Paket zusammenstellen</WideButton>
      <WideButton type="button">bearbeiten</WideButton>
      <Button type="button">importieren</Button>
      <Button type="button">exportieren</Button>
    </ButtonStack>
    <ReleaseGrid>
      <CheckLabel $muted><Check disabled />für Bibliothek freigegeben</CheckLabel>
      <DeleteLine>
        <CheckLabel $muted><Check disabled />deaktiviert</CheckLabel>
        <DeleteButton type="button" disabled>löschen</DeleteButton>
      </DeleteLine>
    </ReleaseGrid>
  </Column>
);

const Navigator = () => (
  <Side>
    <Legend $top={0} $bottom={3}>Navigator</Legend>
    <GapFrame $height="81px">
      <Clip>
        <Table>
          <colgroup><col style={{ width: "33%" }} /><col style={{ width: "34%" }} /><col /></colgroup>
          <thead>
            <tr>
              <HeadCell><SortHead label="Schulnr." order="1" /></HeadCell>
              <HeadCell><SortHead label="Art" order="2" /></HeadCell>
              <HeadCell>Schule</HeadCell>
            </tr>
          </thead>
          <tbody>
            <Row $tone="selected"><Cell>9316</Cell><Cell>GMS</Cell><Cell>9316</Cell></Row>
          </tbody>
        </Table>
      </Clip>
      <SideColumn>
        <Corner />
        <TrackHolder>
          <Track><Step faint /><Spacer /><Step faint down /></Track>
        </TrackHolder>
      </SideColumn>
    </GapFrame>
    <Section>
      <ClippedFrame $height="74px">
        <Clip>
          <Table>
            <thead><tr><HeadCell>Datenbereich</HeadCell></tr></thead>
            <tbody>
              <Row $tone="selected"><Cell>Schüler</Cell></Row>
              <Row $tone="soft"><Cell>Klassen / Klassengruppen</Cell></Row>
              <Row $tone="plain"><Cell>Lehrkräfte</Cell></Row>
            </tbody>
          </Table>
        </Clip>
        <SideColumn>
          <Corner />
          <TrackHolder>
            <Track><Step /><Spacer /><Step down /></Track>
          </TrackHolder>
        </SideColumn>
      </ClippedFrame>
    </Section>
    <FilterSection>
      <SearchGroup>
        <SearchLine>
          <SearchOption>Filter:<Check disabled /></SearchOption>
          <SideButton type="button">Auswählen</SideButton>
        </SearchLine>
        <SearchLine>
          <SearchOption>Suche:<Check disabled /></SearchOption>
          <SideButton type="button">Bearbeiten</SideButton>
        </SearchLine>
      </SearchGroup>
    </FilterSection>
    <GapFrame>
      <TableHolder>
        <Table>
          <colgroup><col /><col style={{ width: 48 }} /></colgroup>
          <thead>
            <tr>
              <HeadCell><SortHead label="Name" order="4" /></HeadCell>
              <HeadCell><SortHead label="Typ" order="3" /></HeadCell>
            </tr>
          </thead>
          <tbody>
            {reports.map(([name, kind], i) => (
              <Row key={name} $tone={i === selectedReport ? "selected" : i % 2 ? "alt" : "plain"}>
                <Cell>
                  {name}
                  {i === selectedReport && (
                    <>
                      <RowHighlight />
                      <RowBadge>1</RowBadge>
                    </>
                  )}
                </Cell>
                <Cell>{kind}</Cell>
              </Row>
            ))}
          </tbody>
        </Table>
      </TableHolder>
      <SideColumn>
        <Corner />
        <TrackHolder>
          <Track>
            <Step />
            <Blank $size="135px" />
            <Thumb $size="22px"><Grip /></Thumb>
            <Blank $size="15px" />
            <Step down />
          </Track>
        </TrackHolder>
      </SideColumn>
    </GapFrame>
  </Side>
);

export default function App() {
  return (
    <Window>
      <GlobalStyle />
      <MenuBar>
        <MenuEntry><MenuTitle type="button"><Mnemonic text="Datei" /></MenuTitle></MenuEntry>
        <MenuEntry><MenuTitle type="button"><Mnemonic text="Bearbeiten" /></MenuTitle></MenuEntry>
        <MenuEntry><MenuTitle type="button"><Mnemonic text="Auswertungen" /></MenuTitle></MenuEntry>
        <MenuEntry><MenuTitle type="button"><Mnemonic text="Berichtsbibliothek-Verwaltung" at={2} /></MenuTitle></MenuEntry>
        <MenuEntry $open>
          <MenuTitle type="button"><Mnemonic text="Modulbezogene Funktionen" /></MenuTitle>
          <Cascade>
            <CascadeItem type="button">Export/Import<RightTri /></CascadeItem>
            <ReportMenu />
          </Cascade>
        </MenuEntry>
        <MenuEntry><MenuTitle type="button"><Mnemonic text="Fenster" /></MenuTitle></MenuEntry>
        <MenuEntry><MenuTitle type="button"><Mnemonic text="Hilfe" /></MenuTitle></MenuEntry>
        <Busy><Spinner /></Busy>
      </MenuBar>
      <Toolbar>
        <Tools
          items={[
            ["Schüler", <People color="#1fa9dc" />],
            ["Schule", <School />],
            ["Klassen", <People color="#f2b50c" tall />],
            ["Zeugnisse", <Certificate />],
            ["Unterricht", <Board />],
          ]}
        />
        <Divider />
        <Tools items={[["Berichte", <BookArrow />], ["Bibliothek", <Binder />]]} />
        <Divider />
        <Tools items={[["Module", <GreyPuzzle />], ["Fenster schließen", <WindowMinus />], ["Aktion", <Bolt />]]} />
        <Divider />
        <Tools items={[["Information", <Round />], ["Hilfe", <Round question />]]} />
        <Divider />
        <YearPicker>
          Gewähltes Schulj
          <YearField>
            <YearInput readOnly />
            <YearSelect aria-label="Schuljahr"><option /></YearSelect>
            <ArrowCap><Chevron down /></ArrowCap>
          </YearField>
        </YearPicker>
        <Spacer />
        <Divider />
        <PaddedTools><Tools items={[["Datenbank", <GreyDb />]]} /></PaddedTools>
        <Divider />
        <ClassLock><Check defaultChecked />Klasse beibehalten</ClassLock>
        <EndDivider />
      </Toolbar>
      <Workspace>
        <TabStrip>
          <Tab type="button">Start<CloseX /></Tab>
          <Tab type="button" $active><Binder />Berichtsbibliothek-Verwaltung<CloseX /></Tab>
        </TabStrip>
        <SubToolbar>
          <Tools
            items={[
              ["Speichern", <Floppy />],
              ["Rückgängig", <Undo />],
              ["Löschen", <BigX />],
              ["Tabelle bearbeiten", <TableEdit />],
            ]}
          />
          <SmallDivider />
          <Tools
            items={[
              ["Liste", <Sheet />],
              ["Erster", <Nav kind="first" />],
              ["Zurückspulen", <Nav kind="rew" />],
              ["Voriger", <Nav kind="prev" />],
              ["Nächster", <Nav kind="next" />],
              ["Vorspulen", <Nav kind="ff" />],
              ["Letzter", <Nav kind="last" />],
              ["Aktualisieren", <Refresh />],
            ]}
          />
          <SmallDivider />
          <Tools items={[["Zurück", <BackArrow />]]} />
          <ToolGroup>
            <Tools items={[["Neu", <PageAdd />], ["Neu aus Vorlage", <DownTri />]]} />
            <SmallDivider />
          </ToolGroup>
          <Tools
            items={[
              ["Ausschneiden", <Scissors />],
              ["Kopieren", <Copy />],
              ["Einfügen", <Paste />],
              ["Seite bearbeiten", <PageEdit />],
              ["Merken", <Flag />],
            ]}
          />
          <SmallDivider />
          <Tools items={[["Drucken", <Printer />], ["Vorschau", <Eye />]]} />
          <Spacer />
          <ToolGroup>
            <Tools items={[["Wechseln", <SwapPages />]]} />
            <SmallDivider />
            <Tools items={[["Schließen", <CloseX />]]} />
            <SmallDivider />
          </ToolGroup>
        </SubToolbar>
        <Panes>
          <Editor>
            <NameRow>Name des Berichts<NameInput readOnly value="Zeugnis GS Übertrittszeugnis 4_IMP_170325_1" /></NameRow>
            <InnerTabs><InnerTab type="button">Bibliothek verwalten</InnerTab></InnerTabs>
            <ScrollArea>
              <Form>
                <FormLeft />
                <FormRight />
              </Form>
              <Track>
                <Step />
                <Blank $size="62px" />
                <Thumb $size="350px"><Grip /></Thumb>
              </Track>
            </ScrollArea>
          </Editor>
          <Navigator />
        </Panes>
      </Workspace>
    </Window>
  );
}
